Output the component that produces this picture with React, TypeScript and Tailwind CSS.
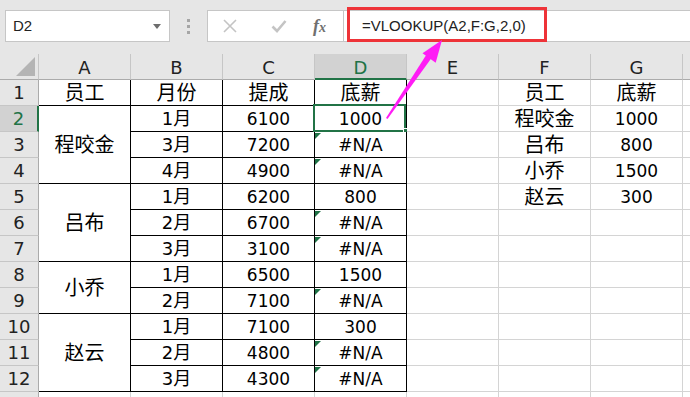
import type { ReactNode } from 'react'

const COLUMNS = ['A', 'B', 'C', 'D', 'E', 'F', 'G']

type CellDef = {
  text?: string
  span?: 2 | 3
}

// one entry per sheet row; null marks a spot covered by a merged cell above
const ROWS: (CellDef | null)[][] = [
  [{ text: '员工' }, { text: '月份' }, { text: '提成' }, { text: '底薪' }, {}, { text: '员工' }, { text: '底薪' }],
  [{ text: '程咬金', span: 3 }, { text: '1月' }, { text: '6100' }, { text: '1000' }, {}, { text: '程咬金' }, { text: '1000' }],
  [null, { text: '3月' }, { text: '7200' }, { text: '#N/A' }, {}, { text: '吕布' }, { text: '800' }],
  [null, { text: '4月' }, { text: '4900' }, { text: '#N/A' }, {}, { text: '小乔' }, { text: '1500' }],
  [{ text: '吕布', span: 3 }, { text: '1月' }, { text: '6200' }, { text: '800' }, {}, { text: '赵云' }, { text: '300' }],
  [null, { text: '2月' }, { text: '6700' }, { text: '#N/A' }, {}, {}, {}],
  [null, { text: '3月' }, { text: '3100' }, { text: '#N/A' }, {}, {}, {}],
  [{ text: '小乔', span: 2 }, { text: '1月' }, { text: '6500' }, { text: '1500' }, {}, {}, {}],
  [null, { text: '2月' }, { text: '7100' }, { text: '#N/A' }, {}, {}, {}],
  [{ text: '赵云', span: 3 }, { text: '1月' }, { text: '7100' }, { text: '300' }, {}, {}, {}],
  [null, { text: '2月' }, { text: '4800' }, { text: '#N/A' }, {}, {}, {}],
  [null, { text: '3月' }, { text: '4300' }, { text: '#N/A' }, {}, {}, {}],
  [{}, {}, {}, {}, {}, {}, {}],
]

const CELL_FONT = { fontFamily: '"DejaVu Sans", "Noto Sans CJK SC", sans-serif' }

// CJK glyphs render a little small next to DejaVu digits, so size by content
function CellText({ text }: { text: string }) {
  const hasCjk = /[\u4e00-\u9fff]/.test(text)
  const allCjk = /^[\u4e00-\u9fff]+$/.test(text)
  const size = allCjk ? 'text-[20px]' : hasCjk ? 'text-[18px]' : 'text-[17px]'
  return <span className={`leading-none ${size}`}>{text}</span>
}

function ColumnHeader({ label, active }: { label: string; active: boolean }) {
  return (
    <div
      className={
        active
          ? 'flex items-center justify-center border-r border-b-2 border-r-[#c6c6c6] border-b-[#217346] bg-[#d2d2d2] pt-[2px] text-[18px] text-[#217346]'
          : 'flex items-center justify-center border-r border-b border-r-[#c6c6c6] border-b-[#ababab] bg-[#e6e6e6] pt-[1px] text-[18px] text-[#222]'
      }
      style={CELL_FONT}
    >
      {label}
    </div>
  )
}

function RowHeader({ label, active }: { label?: number; active: boolean }) {
  return (
    <div
      className={
        active
          ? 'flex items-center justify-center border-r-2 border-b border-r-[#217346] border-b-[#c6c6c6] bg-[#d2d2d2] text-[18px] text-[#217346]'
          : 'flex items-center justify-center border-r border-b border-r-[#ababab] border-b-[#c6c6c6] bg-[#e6e6e6] text-[18px] text-[#222]'
      }
      style={CELL_FONT}
    >
      {label}
    </div>
  )
}

function Cell({
  children,
  boxed,
  span,
  error,
  selected,
}: {
  children?: ReactNode
  boxed: boolean
  span?: 2 | 3
  error?: boolean
  selected?: boolean
}) {
  const border = boxed ? 'border-black' : 'border-[#d4d4d4]'
  const spanClass = span === 3 ? 'row-span-3' : span === 2 ? 'row-span-2' : ''
  return (
    <div
      className={`relative flex items-center justify-center border-r border-b bg-white pt-[1px] text-black ${border} ${spanClass}`}
      style={CELL_FONT}
    >
      {error ? (
        <span className="absolute top-px left-0 h-0 w-0 border-t-[6px] border-r-[6px] border-t-[#1e7145] border-r-transparent" />
      ) : null}
      {children}
      {selected ? (
        <>
          <span className="absolute -top-[2px] -left-[2px] h-[28px] w-[93px] border-2 border-[#217346]" />
          <span className="absolute -right-[3px] -bottom-[3px] h-[6px] w-[6px] border border-white bg-[#217346]" />
        </>
      ) : null}
    </div>
  )
}

function FormulaBar() {
  return (
    <div className="relative flex h-[54px] items-start bg-[#e6e6e6] pt-[10px]">
      <div className="ml-[5px] flex h-[32px] w-[165px] items-center justify-between border border-[#c6c6c6] bg-white pr-[8px] pl-[7px]">
        <span className="text-[15px] text-[#222]" style={{ fontFamily: '"Liberation Sans", sans-serif' }}>
          D2
        </span>
        <span className="h-0 w-0 border-x-[4px] border-t-[5px] border-x-transparent border-t-[#6d6d6d]" />
      </div>
      <div className="flex h-[32px] w-[37px] flex-col items-center justify-center gap-[3px]">
        <span className="h-[3px] w-[3px] bg-[#a6a6a6]" />
        <span className="h-[3px] w-[3px] bg-[#a6a6a6]" />
        <span className="h-[3px] w-[3px] bg-[#a6a6a6]" />
      </div>
      <div className="flex h-[32px] w-[137px] items-center border border-[#c6c6c6] bg-white">
        <svg width="14" height="14" viewBox="0 0 14 14" className="ml-[15px]">
          <path d="M1 1 L13 13 M13 1 L1 13" stroke="#c4c4c4" strokeWidth="1.6" fill="none" />
        </svg>
        <svg width="16" height="14" viewBox="0 0 16 14" className="ml-[34px]">
          <path d="M1.5 7.5 L6 12 L14.5 2" stroke="#c4c4c4" strokeWidth="2.6" fill="none" />
        </svg>
        <span
          className="ml-[26px] text-[18px] font-bold text-[#707070] italic"
          style={{ fontFamily: '"Liberation Serif", serif' }}
        >
          f<span className="text-[14px]">x</span>
        </span>
      </div>
      <div className="flex h-[32px] flex-1 items-center border-y border-[#c6c6c6] bg-white pl-[18px]">
        <span className="text-[15px] text-[#222]" style={{ fontFamily: '"Liberation Sans", sans-serif' }}>
          =VLOOKUP(A2,F:G,2,0)
        </span>
      </div>
      <div className="absolute top-[7px] left-[347px] h-[35px] w-[200px] border-[3px] border-[#ee3338]" />
    </div>
  )
}

function Sheet() {
  return (
    <div className="grid grid-cols-[39px_repeat(7,92px)_8px] grid-rows-[repeat(14,26px)]">
      <div className="relative border-r border-b border-r-[#c6c6c6] border-b-[#ababab] bg-[#e6e6e6]">
        <span className="absolute right-[3px] bottom-[3px] h-0 w-0 border-b-[19px] border-l-[19px] border-b-[#b4b4b4] border-l-transparent" />
      </div>
      {COLUMNS.map((col) => (
        <ColumnHeader key={col} label={col} active={col === 'D'} />
      ))}
      <div className="border-b border-b-[#ababab] bg-[#e6e6e6]" />

      {ROWS.map((row, rowIndex) => {
        const rowNumber = rowIndex + 1
        return [
          <RowHeader
            key={`h${rowNumber}`}
            label={rowNumber <= 12 ? rowNumber : undefined}
            active={rowNumber === 2}
          />,
          ...row.map((cell, colIndex) => {
            if (cell === null) return null
            const boxed = colIndex < 4 && rowNumber <= 12
            return (
              <Cell
                key={`${rowNumber}-${colIndex}`}
                boxed={boxed}
                span={cell.span}
                error={cell.text === '#N/A'}
                selected={rowNumber === 2 && colIndex === 3}
              >
                {cell.text ? <CellText text={cell.text} /> : null}
              </Cell>
            )
          }),
          <div key={`t${rowNumber}`} className="border-b border-[#d4d4d4] bg-white" />,
        ]
      })}
    </div>
  )
}

export default function App() {
  return (
    <div className="relative h-[397px] w-[690px] overflow-hidden bg-white">
      <FormulaBar />
      <Sheet />
      <svg
        className="pointer-events-none absolute inset-0"
        width="690"
        height="397"
        viewBox="0 0 690 397"
      >
        <polygon points="386,118 387.5,119 431.5,58 426.5,54.5" fill="#ff1cf5" />
        <polygon points="442,40 422.5,53.3 435.7,62.7" fill="#ff1cf5" />
      </svg>
    </div>
  )
}
